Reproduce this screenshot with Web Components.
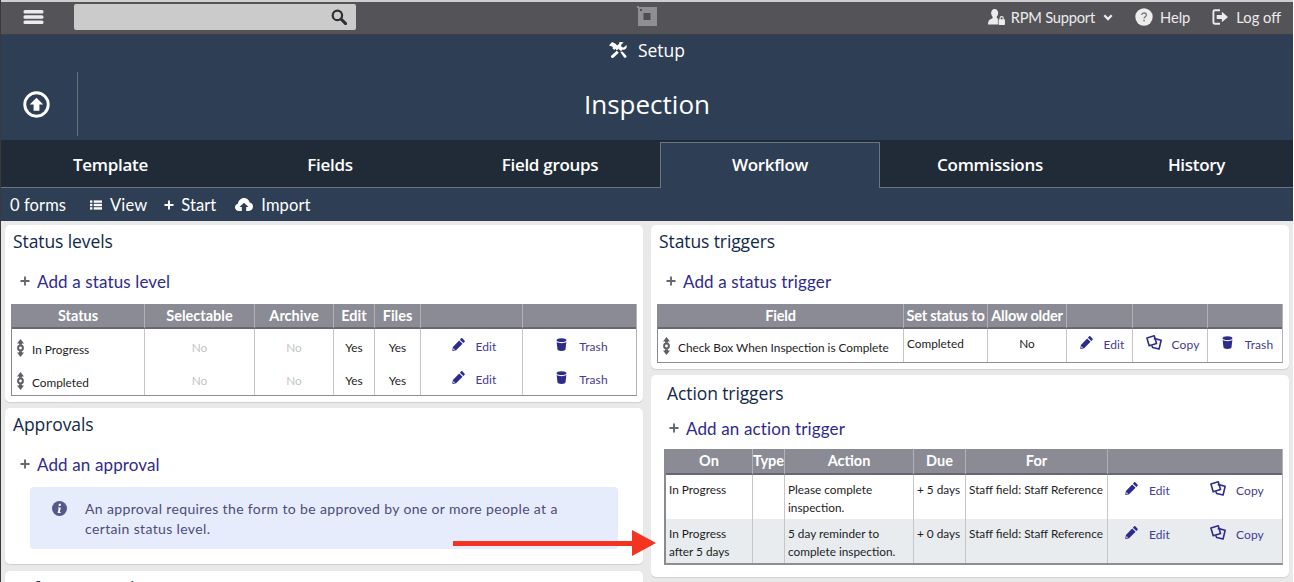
<!DOCTYPE html>
<html lang="en">
<head>
<meta charset="utf-8">
<title>Inspection - Setup</title>
<style>
  html, body { margin: 0; height: 582px; overflow: hidden; background: #e9e9e9; }
  body { font-family: Lato, "Noto Sans", sans-serif; }
</style>
</head>
<body>
<workflow-page></workflow-page>

<script>
const ICONS = {
  bars: `<svg viewBox="0 0 20 14"><g fill="currentColor"><rect y="0" width="20" height="3.6" rx="1.6"/><rect y="5.2" width="20" height="3.6" rx="1.6"/><rect y="10.4" width="20" height="3.6" rx="1.6"/></g></svg>`,
  search: `<svg viewBox="0 0 16 16"><circle cx="6.4" cy="6.4" r="4.7" fill="none" stroke="currentColor" stroke-width="2.2"/><path d="M10 10l4.6 4.6" stroke="currentColor" stroke-width="3" stroke-linecap="round"/></svg>`,
  logo: `<svg viewBox="0 0 20 20"><path d="M0 0h2v1h18v19H1V2H0z" fill="#8f8e92"/><rect x="6.5" y="7" width="7" height="7" fill="#4e4d52"/><rect x="3" y="3" width="2" height="2" fill="#4e4d52"/></svg>`,
  user: `<svg viewBox="0 0 18 17"><path d="M7 0c2.4 0 3.8 1.8 3.8 4.2 0 1.6-.6 3-1.5 3.9v1.4c.4.3.8.5 1.2.7v6.3H0c0-3 .6-4.6 2.6-5.6l2.2-1.1V8.100C3.900 7.200 3.300 5.800 3.300 4.200 3.300 1.800 4.600 0 7 0z" fill="currentColor"/><rect x="11.200" y="11" width="6.800" height="6" rx=".8" fill="currentColor"/><path d="M12.800 11.300V9.800a1.700 1.700 0 0 1 3.400 0v1.500" fill="none" stroke="currentColor" stroke-width="1.200"/></svg>`,
  chevron: `<svg viewBox="0 0 10 7"><path d="M1.300 1.300L5 5l3.700-3.700" fill="none" stroke="currentColor" stroke-width="2.300"/></svg>`,
  help: `<svg viewBox="0 0 18 18"><circle cx="9" cy="9" r="8.700" fill="currentColor"/><path d="M6.600 7c.2-1.300 1.100-2 2.400-2 1.400 0 2.400.8 2.400 2 0 1.900-2.300 1.800-2.300 3.500" fill="none" stroke="#77767b" stroke-width="1.300"/><rect x="8.300" y="11.800" width="1.500" height="1.500" fill="#77767b"/></svg>`,
  logoff: `<svg viewBox="0 0 17 17"><path d="M8.500 1.300H2.800c-.8 0-1.300.5-1.300 1.300v11.800c0 .8.500 1.300 1.300 1.300h5.700" fill="none" stroke="currentColor" stroke-width="2"/><path d="M5 6.300h5.500V2.800L17 8.500l-6.500 5.700v-3.500H5z" fill="currentColor"/></svg>`,
  tools: `<svg viewBox="0 0 18 16"><g fill="currentColor"><path d="M0 3.400L3 0l3.200 1.600 2 2 2-1.900c-.4-1 0-1.500 1.100-1.600 1.500-.2 2.700.1 3.300.5l-2.600 2.300.6 2.100 2.100.5L17.500 3c.5 1.700.1 3.200-.9 4.100-.9.800-2 .9-3 .4l-1.600 1.700-2.500-2.500-1.600 1.700L6.400 6.700 5.200 7.900 3.300 6l.8-1.100-2.400-1z"/><path d="M7.800 8.800l2 2-5.400 5c-.7.500-1.400.3-2-.2s-.7-1.300-.2-1.900z"/><path d="M11.300 9.900l2.200-.4 3.800 4.200c.4.700.2 1.300-.4 1.800-.6.400-1.200.5-1.800-.1z"/></g></svg>`,
  up: `<svg viewBox="0 0 26 26"><circle cx="13" cy="13" r="11.300" fill="none" stroke="currentColor" stroke-width="2.800"/><path d="M13 6.500l6.500 6.500h-3.700v6h-5.600v-6H6.500z" fill="currentColor"/></svg>`,
  list: `<svg viewBox="0 0 13 10"><g fill="currentColor"><rect width="2.600" height="2.600" y="0"/><rect width="9" height="2.600" x="4" y="0"/><rect width="2.600" height="2.600" y="3.700"/><rect width="9" height="2.600" x="4" y="3.700"/><rect width="2.600" height="2.600" y="7.400"/><rect width="9" height="2.600" x="4" y="7.400"/></g></svg>`,
  plus: `<svg viewBox="0 0 10 10"><path d="M5 .5v9M.5 5h9" stroke="currentColor" stroke-width="1.900"/></svg>`,
  cloud: `<svg viewBox="0 0 18 13"><path d="M4 13C1.700 13 0 11.400 0 9.300c0-1.800 1.200-3.200 2.900-3.600C3.300 2.500 5.900 0 9 0c2.800 0 5.100 1.900 5.700 4.500 1.900.3 3.300 2 3.300 4.100 0 2.500-1.800 4.400-4.200 4.400h-2.600V9h2.300L9 4.700 4.500 9h2.300v4z" fill="currentColor"/></svg>`,
  grip: `<svg viewBox="0 0 7 18"><g fill="currentColor"><path d="M3.500 0L7 4.500H5v1.300H2V4.500H0z"/><path d="M3.500 18L7 13.500H5v-1.300H2v1.300H0z"/><circle cx="3.500" cy="9" r="2.400" fill="none" stroke="currentColor" stroke-width="2"/></g></svg>`,
  pencil: `<svg viewBox="0 0 14 14"><path d="M11.100.4l2.500 2.500c.4.400.4.800 0 1.200L12.200 5.500 8.500 1.800 9.900.4c.4-.4.800-.4 1.200 0zM7.700 2.600l3.700 3.700-7 7-3.600.7-.5-.5.700-3.800z" fill="currentColor"/><circle cx="2" cy="12" r=".8" fill="#fff"/></svg>`,
  trash: `<svg viewBox="0 0 12 14"><path d="M.6 2.500C.6 1 2.700.2 6 .2s5.400.8 5.400 2.300c0 1-2.400 1.700-5.400 1.700S.6 3.500.6 2.500z" fill="currentColor"/><path d="M.7 4.400C2 5.300 4 5.500 6 5.500s4-.2 5.300-1.100l-.9 7.900C10.200 13.400 8.600 14 6 14s-4.200-.6-4.400-1.700z" fill="currentColor"/></svg>`,
  copy: `<svg viewBox="0 0 17 17"><g fill="none" stroke="currentColor" stroke-width="1.700" stroke-linejoin="round"><path d="M1 3.200L8.800.9l2.400 8.200-7.800 2.300z"/><path d="M8.200 3.600l7.900 2-2.200 9.300-6.900-1.700-.8-2.100"/></g></svg>`,
  info: `<svg viewBox="0 0 16 16"><circle cx="8" cy="8" r="8" fill="currentColor"/><rect x="7.700" y="3" width="2.300" height="2.200" rx=".6" fill="#fff" transform="skewX(-8)"/><path d="M6.500 6.800h3l-1.200 5h1l-.2 1H6l1.200-5h-1z" fill="#fff"/></svg>`
};

class AppIcon extends HTMLElement {
  connectedCallback() {
    const size = this.getAttribute("size") || "14";
    const height = this.getAttribute("height") || size;
    this.attachShadow({ mode: "open" }).innerHTML = `
      <style>
        :host { display: inline-flex; flex: none; width: ${size}px; height: ${height}px; }
        svg { width: 100%; height: 100%; display: block; }
      </style>
      ${ICONS[this.getAttribute("name")] || ""}
    `;
  }
}
customElements.define("app-icon", AppIcon);

class TopBar extends HTMLElement {
  constructor() {
    super();
    this.attachShadow({ mode: "open" }).innerHTML = `
      <style>
        :host {
          display: grid;
          grid-template-columns: 1fr auto 1fr;
          align-items: center;
          height: 32px;
          background: #545358;
          border-top: 2px solid #cfcfcf;
          border-bottom: 1px solid #3f3f44;
          color: #ececec;
          font: 14.7px Lato, sans-serif;
        }
        .left { display: flex; align-items: center; padding-left: 22px; margin-top: -2px; }
        .search {
          display: flex;
          justify-content: flex-end;
          align-items: center;
          margin-left: 30px;
          width: 282px;
          height: 26px;
          background: #cbcbcb;
          border-radius: 2px;
        }
        .search div {
          display: flex;
          align-items: center;
          justify-content: center;
          width: 34px;
          height: 26px;
          color: #2f2f33;
        }
        .logo { margin-top: -4px; }
        .right { display: flex; justify-content: flex-end; align-items: center; padding-right: 12px; margin-top: -2px; }
        .item { display: flex; align-items: center; gap: 6px; }
        .user { margin-right: 22px; }
        .user span { letter-spacing: -.25px; }
        .user app-icon:last-child { margin-left: 2px; }
        .help { margin-right: 22px; gap: 7px; }
        .logoff { gap: 8px; }
      </style>
      <div class="left">
        <app-icon name="bars" size="21" height="14"></app-icon>
        <div class="search"><div><app-icon name="search" size="16"></app-icon></div></div>
      </div>
      <app-icon class="logo" name="logo" size="20"></app-icon>
      <div class="right">
        <div class="item user"><app-icon name="user" size="17" height="16"></app-icon><span>RPM Support</span><app-icon name="chevron" size="10" height="7"></app-icon></div>
        <div class="item help"><app-icon name="help" size="18"></app-icon><span>Help</span></div>
        <div class="item logoff"><app-icon name="logoff" size="16"></app-icon><span>Log off</span></div>
      </div>
    `;
  }
}
customElements.define("top-bar", TopBar);

class PageHeader extends HTMLElement {
  constructor() {
    super();
    this.attachShadow({ mode: "open" }).innerHTML = `
      <style>
        :host {
          display: block;
          height: 105px;
          background: #2e3e54;
          color: #fff;
          font-family: "Open Sans", sans-serif;
        }
        .setup {
          display: flex;
          justify-content: center;
          align-items: center;
          gap: 11px;
          height: 30px;
          font-size: 17.5px;
        }
        .row {
          display: grid;
          grid-template-columns: 77px 1fr 77px;
          align-items: center;
          height: 64px;
          margin-top: 7px;
        }
        .back {
          display: flex;
          justify-content: center;
          align-items: center;
          height: 64px;
          border-right: 1px solid #66707f;
          padding-right: 5px;
        }
        h1 { margin: 0; text-align: center; font-size: 26px; font-weight: 400; }
      </style>
      <div class="setup"><app-icon name="tools" size="18" height="16"></app-icon><span>Setup</span></div>
      <div class="row">
        <div class="back"><app-icon name="up" size="27"></app-icon></div>
        <h1>Inspection</h1>
      </div>
    `;
  }
}
customElements.define("page-header", PageHeader);

class TabBar extends HTMLElement {
  constructor() {
    super();
    const tabs = ["Template", "Fields", "Field groups", "Workflow", "Commissions", "History"];
    this.attachShadow({ mode: "open" }).innerHTML = `
      <style>
        :host {
          display: grid;
          grid-template-columns: 219px repeat(4, 220px) 1fr;
          height: 46px;
          padding-top: 2px;
          background: #212b38;
          color: #fff;
          font: 600 17px "Open Sans", sans-serif;
        }
        div {
          display: flex;
          justify-content: center;
          align-items: center;
          border-bottom: 1px solid #6b7583;
          letter-spacing: -.3px;
        }
        .active {
          background: #2e3e54;
          border: 1px solid #6b7583;
          border-bottom: none;
          padding-bottom: 2px;
        }
      </style>
      ${tabs.map(t => `<div class="${t === "Workflow" ? "active" : ""}">${t}</div>`).join("")}
    `;
  }
}
customElements.define("tab-bar", TabBar);

class SubBar extends HTMLElement {
  constructor() {
    super();
    this.attachShadow({ mode: "open" }).innerHTML = `
      <style>
        :host {
          display: flex;
          align-items: center;
          height: 33px;
          padding-left: 9px;
          background: #2e3e54;
          color: #fff;
          font: 16.5px Lato, sans-serif;
          letter-spacing: .1px;
        }
        span { display: flex; align-items: center; }
        .view { margin-left: 24px; gap: 8px; }
        .start { margin-left: 17px; gap: 7px; }
        .import { margin-left: 19px; gap: 8px; }
      </style>
      <span>0 forms</span>
      <span class="view"><app-icon name="list" size="12" height="10"></app-icon>View</span>
      <span class="start"><app-icon name="plus" size="10"></app-icon>Start</span>
      <span class="import"><app-icon name="cloud" size="18" height="13"></app-icon>Import</span>
    `;
  }
}
customElements.define("sub-bar", SubBar);

class PanelCard extends HTMLElement {
  constructor() {
    super();
    this.attachShadow({ mode: "open" }).innerHTML = `
      <style>
        :host {
          display: block;
          overflow: hidden;
          background: #fff;
          border-radius: 5px;
          box-shadow: 0 1px 1px #cfcfcf;
          padding: var(--pad-top, 4px) 6px var(--pad-bottom, 6px) var(--pad-left, 6px);
        }
        h2 {
          margin: 0 0 0 var(--title-left, 2px);
          font: 400 17.5px/24px "Open Sans", sans-serif;
          color: #12294a;
          letter-spacing: -.1px;
        }
        .add {
          display: flex;
          align-items: center;
          gap: 7px;
          height: 24px;
          margin: var(--add-gap, 16px) 0 var(--add-bottom, 11px) var(--add-left, 9px);
          font: 17px Lato, sans-serif;
          letter-spacing: .13px;
          color: #2f2b8c;
        }
        .add app-icon { color: #66666e; }
      </style>
      <h2></h2>
      <div class="add"><app-icon name="plus" size="10"></app-icon><span></span></div>
      <slot></slot>
    `;
  }

  connectedCallback() {
    this.shadowRoot.querySelector("h2").textContent = this.getAttribute("heading");
    const add = this.shadowRoot.querySelector(".add");
    if (this.hasAttribute("add")) add.querySelector("span").textContent = this.getAttribute("add");
    else add.remove();
  }
}
customElements.define("panel-card", PanelCard);

const ACTION_ICONS = {
  pencil: { w: 13, h: 13, gap: 11, top: -1 },
  trash: { w: 11, h: 13, gap: 12, top: -1 },
  copy: { w: 16, h: 16, gap: 10, top: -2 }
};

class RowAction extends HTMLElement {
  connectedCallback() {
    const name = this.getAttribute("icon");
    const a = ACTION_ICONS[name];
    this.attachShadow({ mode: "open" }).innerHTML = `
      <style>
        :host {
          display: flex;
          justify-content: center;
          align-items: flex-start;
          gap: ${a.gap}px;
          color: #2f2b8c;
          font: 12px/18px Lato, sans-serif;
          letter-spacing: .1px;
        }
        span { color: #433c92; margin-top: -1px; }
        app-icon { margin-top: ${a.top}px; }
      </style>
      <app-icon name="${name}" size="${a.w}" height="${a.h}"></app-icon>
      <span><slot></slot></span>
    `;
  }
}
customElements.define("row-action", RowAction);

const edit = `<row-action icon="pencil">Edit</row-action>`;
const copy = `<row-action icon="copy">Copy</row-action>`;
const trash = `<row-action icon="trash">Trash</row-action>`;
const grip = text => `<div class="grip"><app-icon name="grip" size="7" height="18"></app-icon><span>${text}</span></div>`;
const muted = `<span class="muted">No</span>`;
const middle = text => ({ text, cls: "mid" });
const act = text => ({ text, cls: "act" });
const two = `<div class="pair">${edit}${copy}</div>`;

const TABLES = {
  "status-levels": {
    cols: [133, 110, 79, 41, 46, 102, 113],
    heads: ["Status", "Selectable", "Archive", "Edit", "Files", "", ""],
    headHeight: 23,
    headSpacing: 0,
    rowHeight: 33,
    pad: 10,
    actionPad: 10,
    gripTop: 0,
    rows: [
      [grip("In Progress"), middle(muted), middle(muted), middle("Yes"), middle("Yes"), act(edit), act(trash)],
      [grip("Completed"), middle(muted), middle(muted), middle("Yes"), middle("Yes"), act(edit), act(trash)]
    ]
  },
  "status-triggers": {
    cols: [246, 84, 79, 66, 75, 74],
    heads: ["Field", "Set status to", "Allow older", "", "", ""],
    headHeight: 23,
    headSpacing: -.2,
    rowHeight: 33,
    pad: 6,
    actionPad: 8,
    gripTop: 2,
    rows: [
      [grip("Check Box When Inspection is Complete"), "Completed", middle("No"), act(edit), act(copy), act(trash)]
    ]
  },
  "action-triggers": {
    cols: [87, 32, 129, 52, 142, 174],
    heads: ["On", "Type", "Action", "Due", "For", ""],
    headHeight: 24,
    headSpacing: 0,
    rowHeight: 44,
    pad: 6,
    actionPad: 6,
    gripTop: 0,
    thick: true,
    rows: [
      ["In Progress", "", "Please complete<br>inspection.", "+ 5 days", "Staff field: Staff Reference", two],
      ["In Progress<br>after 5 days", "", "5 day reminder to<br>complete inspection.", "+ 0 days", "Staff field: Staff Reference", two]
    ]
  }
};

class DataTable extends HTMLElement {
  connectedCallback() {
    const t = TABLES[this.getAttribute("name")];
    const cell = c => typeof c === "string"
      ? `<td>${c}</td>`
      : `<td class="${c.cls}">${c.text}</td>`;
    const total = t.cols.reduce((a, b) => a + b, 0);
    this.attachShadow({ mode: "open" }).innerHTML = `
      <style>
        :host { display: block; font: 11.8px/18px Lato, sans-serif; color: #1c1c24; }
        table {
          width: ${total}px;
          table-layout: fixed;
          border-collapse: separate;
          border-spacing: 0;
          border-left: ${t.thick ? 2 : 1}px solid #8a8b90;
          border-bottom: ${t.thick ? 2 : 1}px solid #8e8e92;
          border-right: 1px solid #b4b4b8;
        }
        th {
          height: ${t.headHeight}px;
          box-sizing: content-box;
          padding: 0;
          background: #8a8b94;
          border-bottom: 2px solid #68686e;
          border-right: 1px solid #b2b2b6;
          color: #fff;
          font: 700 14.5px/${t.headHeight}px Lato, sans-serif;
          letter-spacing: ${t.headSpacing}px;
          white-space: nowrap;
          overflow: visible;
        }
        td {
          height: ${t.rowHeight}px;
          box-sizing: border-box;
          padding: ${t.pad}px 0 0 3px;
          vertical-align: top;
          border-right: 1px solid #c6c6c8;
          white-space: nowrap;
        }
        tr > :last-child { border-right: none; }
        tr:nth-child(2) td { background: ${t.thick ? "#e9ecef" : "#fff"}; }
        td.mid { text-align: center; padding-left: 0; }
        td.act { padding: ${t.actionPad}px 0 0 5px; }
        .muted { color: #c4c4c6; }
        .grip { display: flex; align-items: flex-start; gap: 8px; margin: ${t.gripTop}px 0 0 2px; }
        .grip span { padding-top: 2px; }
        .grip app-icon { color: #5f5f68; }
        .pair { display: flex; gap: 40px; padding: 2px 0 0 14px; }
      </style>
      <table>
        <colgroup>${t.cols.map(w => `<col style="width:${w}px">`).join("")}</colgroup>
        <thead><tr>${t.heads.map(h => `<th>${h}</th>`).join("")}</tr></thead>
        <tbody>${t.rows.map(r => `<tr>${r.map(cell).join("")}</tr>`).join("")}</tbody>
      </table>
    `;
  }
}
customElements.define("data-table", DataTable);

class InfoNote extends HTMLElement {
  constructor() {
    super();
    this.attachShadow({ mode: "open" }).innerHTML = `
      <style>
        :host {
          display: flex;
          gap: 18px;
          margin: 0 19px 15px 19px;
          padding: 12px 50px 10px 22px;
          background: #e6ecfb;
          border-radius: 4px;
          color: #4c4d78;
          font: 14px/20px Lato, sans-serif;
          letter-spacing: .36px;
        }
        app-icon { color: #55588a; margin-top: 2px; }
      </style>
      <app-icon name="info" size="15"></app-icon>
      <div><slot></slot></div>
    `;
  }
}
customElements.define("info-note", InfoNote);

class WorkflowPage extends HTMLElement {
  constructor() {
    super();
    this.attachShadow({ mode: "open" }).innerHTML = `
      <style>
        :host {
          display: block;
          position: relative;
          height: 582px;
          overflow: hidden;
          border-left: 1px solid #3a3a3a;
          border-right: 1px solid #fff;
          box-sizing: border-box;
        }
        .columns {
          display: grid;
          grid-template-columns: 638px 638px;
          gap: 8px;
          padding: 4px 0 0 4px;
        }
        .stack { display: flex; flex-direction: column; gap: 6px; align-items: stretch; }
        .arrow { position: absolute; left: 452px; top: 530px; width: 203px; height: 26px; }
      </style>
      <top-bar></top-bar>
      <page-header></page-header>
      <tab-bar></tab-bar>
      <sub-bar></sub-bar>
      <div class="columns">
        <div class="stack">
          <panel-card heading="Status levels" add="Add a status level"><data-table name="status-levels"></data-table></panel-card>
          <panel-card heading="Approvals" add="Add an approval" style="--pad-bottom:0px">
            <info-note>An approval requires the form to be approved by one or more people at a certain status level.</info-note>
          </panel-card>
          <panel-card heading="Reference card" style="margin-top:1px;--pad-top:5px"></panel-card>
        </div>
        <div class="stack">
          <panel-card heading="Status triggers" add="Add a status trigger"><data-table name="status-triggers"></data-table></panel-card>
          <panel-card heading="Action triggers" add="Add an action trigger"
            style="--pad-top:6px;--pad-left:13px;--pad-bottom:12px;--title-left:3px;--add-left:5px;--add-gap:11px;--add-bottom:9px">
            <data-table name="action-triggers"></data-table>
          </panel-card>
        </div>
      </div>
      <svg class="arrow" viewBox="0 0 203 26"><path d="M0 11h179V0l24 13-24 13V16H0z" fill="#f43320"/></svg>
    `;
  }
}
customElements.define("workflow-page", WorkflowPage);
</script>
</body>
</html>
